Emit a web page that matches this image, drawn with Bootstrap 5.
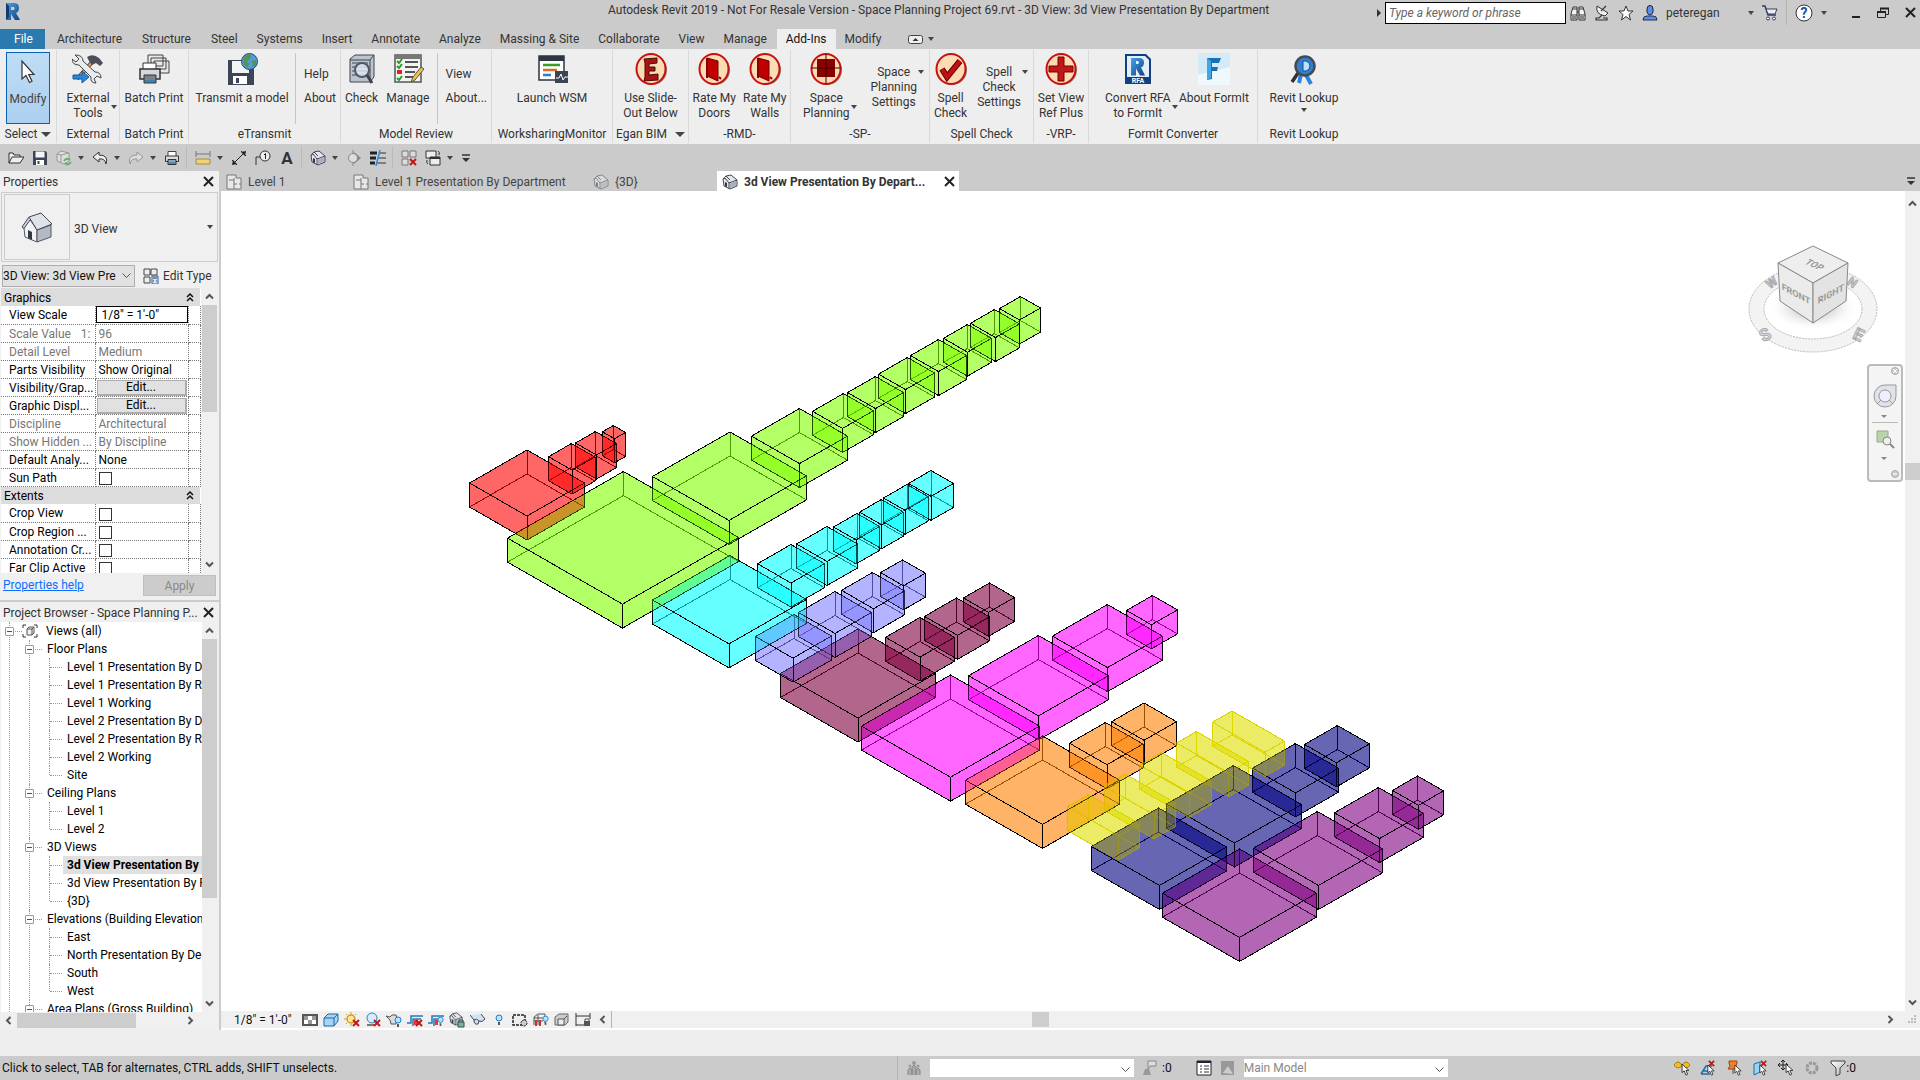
<!DOCTYPE html>
<html lang="en">
<head>
<meta charset="utf-8">
<meta name="viewport" content="width=device-width, initial-scale=1">
<title>Autodesk Revit 2019</title>
<link href="https://cdn.jsdelivr.net/npm/bootstrap@5.3.0/dist/css/bootstrap.min.css" rel="stylesheet">
<style>
:root{--chrome:#cbcbcb;--panel:#eee;--line:#ccc}
body{height:100vh;overflow:hidden;font-family:Roboto,"Open Sans",sans-serif;font-size:12px;line-height:16px;color:#333;background:var(--panel)}
button{font:inherit;color:inherit;background:none;border:0;padding:0}
input,select{font:inherit;color:inherit;border-radius:0}
svg{flex:none;display:block}
.i16{width:16px;height:16px}
.i32{width:32px;height:32px}
.caret{width:0;height:0;border:3px solid transparent;border-top:4px solid #444;border-bottom:0;flex:none}
.caret-lg{border-width:5px 5px 0}
.x-btn svg{width:11px;height:11px}
/* title bar */
.titlebar{height:29px;background:var(--chrome);flex:none}
.title-text{left:608px;top:2px}
.search-box{width:181px;height:22px;border:1px solid #000;padding:0 3px;font-style:italic}
.search-box::placeholder{color:#666;opacity:1}
.user-btn{width:112px}
.vsep{width:1px;align-self:stretch;background:#b3b3b3}
/* ribbon */
.tabstrip{height:20px;background:var(--chrome)}
.tabstrip a{color:#333;text-decoration:none;padding:2px 10px;line-height:16px}
.tabstrip a:nth-child(n+5){padding-left:9px}
.tabstrip a.file-tab{background:#2a7ab0;color:#fff;padding:2px 14px;margin-right:2px;width:45px}
.tabstrip a.active{background:var(--panel);color:#111;padding:2px 9px}
.ribbon{height:95px;background:var(--panel)}
.rpanel{border-right:1px solid #d9d9d9;margin:1px 0}
.rbody{height:74px;padding-top:3px}
.rtitle{height:20px;line-height:20px}
.rb{line-height:15px;position:relative;text-align:center;white-space:nowrap}
.rb svg{margin-bottom:6px}
.rb .caret{position:absolute;right:-7px;top:52px}
.rb.below .caret{right:50%;margin-right:-3px;top:55px}
.rtext{line-height:15px;position:relative;white-space:nowrap;padding-top:12px;align-self:flex-start}
.rtext .caret{position:absolute;right:-7px;top:17px}
.rlinks button{display:block;height:24px;text-align:left}
.rlinks{padding-top:9px;border-left:1px solid #c6c6c6;padding-left:8px}
.w-57{width:57px}.w-63{width:63px}.w-69{width:69px}.w-152{width:152px}.w-151{width:151px}.w-121{width:121px}.w-76{width:76px}.w-102{width:102px}.w-139{width:139px}.w-104{width:104px}.w-55{width:55px}.w-169{width:169px}.w-92{width:92px}
.modify-btn{width:44px;height:72px;margin-top:-1px;background:linear-gradient(#bfdcf5,#acd0f1);border:1px solid #0a60b5;padding-top:2px;color:#444}
.modify-btn svg{margin-bottom:5px}
/* quick access */
.qat{height:27px;background:var(--chrome);padding-left:8px}
.qat .vsep{margin:2px 0 2px 6px;background:#bbb}
.qat .pair{gap:6px}
/* workspace */
.side{width:221px;border-right:2px solid var(--line);background:#f0f0f0}
.side>div{flex-shrink:0}
.side-head{height:20px;padding:1px 5px 0 3px}
.type-box{height:70px;margin:1px 1px 0 1px;border:1px solid var(--line);padding:1px 4px 1px 2px}
.type-thumb{width:66px;border:1px solid var(--line)}
.type-name{padding-top:3px}
.inst-row{margin:3px 0 1px 2px}
.inst-sel{width:133px;height:22px;border:1px solid #adadad;background:#e1e1e1;padding:0 14px 0 0;appearance:none;color:#111}
.chev{position:absolute;right:4px;top:6px;width:9px;height:9px}
.grid-wrap{height:285px;overflow:hidden}
.prop{width:199px;table-layout:fixed;background:#fff;color:#000;border-collapse:collapse;margin:0 1px}
.prop td,.prop th{height:18px;padding:1px 0 0;border-bottom:1px dotted #777;border-right:1px dotted #777;font-weight:400;line-height:16px;white-space:nowrap;overflow:hidden}
.prop th{padding-left:8px}.prop td{padding-left:3px}
.prop .sect th{background:#dcdcdc;border:0;padding:1px 6px 0 3px}
.prop .dis{color:#777}
.prop input[type=text]{width:92px;height:17px;border:1px solid #000;padding:0 5px;margin:-1px 0 0 -3px;display:block;background:#fff}
.prop input[type=checkbox]{width:13px;height:13px;margin:2px 0 0;appearance:none;border:1px solid #333;background:#fff;display:block}
.prop .edit{width:90px;height:16px;margin-left:-2px;line-height:13px;background:#e1e1e1;border:1px solid #adadad;border-bottom-width:2px;border-right-width:2px;display:block;color:#000}
.vbar{width:15px;background:#f0f0f0;padding:4px 0}
.vbar>svg,.hbar>svg{width:9px;height:9px}
.vbar .thumb{width:15px;background:#cdcdcd;flex:none}
.prop-thumb{height:107px}
.tree-thumb{height:259px}
.tree-bar{margin-right:2px}
.hbar{height:16px;background:#f0f0f0}
.hbar .thumb{height:15px;background:#cdcdcd}
.tree-hbar{margin-bottom:2px}
.tree-hthumb{width:119px}
.help-row{height:27px;padding:2px 3px 0}
.help-row a{padding-top:2px}
.apply{width:73px;height:21px;background:#ccc;border:1px solid #bfbfbf;color:#888}
.browser-head{border-top:2px solid var(--line);height:22px}
.side>.tree-area{flex:1 1 0}
.tree{background:#fff;margin-left:1px;overflow:hidden;color:#000}
.tree ul{list-style:none;margin:0;padding:0}
.tree li{position:relative;white-space:nowrap;line-height:18px;padding-left:21px}
.tree li::before{content:"";position:absolute;left:8px;top:0;bottom:0;border-left:1px dotted #999}
.tree li::after{content:"";position:absolute;left:9px;top:9px;width:12px;border-top:1px dotted #999}
.tree li li:last-child::before{bottom:auto;height:9px}
.tree li li{padding-left:26px;margin-left:-1px}
.tree ul.leafs li{margin-left:-6px;padding-left:26px}
.tree .row-label{display:flex;align-items:center;height:18px}
.exp{position:absolute;left:4px;top:5px;width:9px;height:9px;border:1px solid #999;background:#fff;z-index:1;border-radius:1px}
.exp::after{content:"";position:absolute;left:1px;right:1px;top:3px;height:1px;background:#2f4f9f}
.tree .cur{background:#e0e0e0;font-weight:700;margin-left:-4px;padding-left:4px}
/* document area */
.doctabs{height:20px;background:var(--chrome)}
.doctab{gap:6px;padding:1px 0 0 5px;color:#444}
.doctab.w1{width:127px}.doctab.w2{width:240px}.doctab.w3{width:129px}
.doctab.active{background:#fff;font-weight:700;width:242px;color:#333}
.canvas{background:#fff;min-width:0}
.cube-svg{position:absolute;right:22px;top:47px}
.nav-bar{position:absolute;right:2px;top:173px;width:36px;height:118px;border:2px solid #bbb;border-radius:4px;background:#f4f4f4}
.doc-thumb{height:17px;margin-top:255px}
.doc-hthumb{width:17px;margin-left:33%}
.vcb{height:17px;margin-left:2px}
.vcb .scale{width:79px;padding-left:11px;color:#111}
.vcb .tools{gap:5px;width:296px}
.foot-gap{height:2px}
.gutter{height:26px}
.statusbar{height:24px;background:var(--chrome);color:#111}
.status-msg{width:897px;padding-left:2px}
.stat-sel{height:18px;width:204px;background:#fff;border:0;appearance:none;padding:0;color:#888}
.stat-tools{gap:10px;margin-right:64px}
</style>
<script src="https://cdn.jsdelivr.net/npm/bootstrap@5.3.0/dist/js/bootstrap.bundle.min.js"></script>
</head>
<body class="d-flex flex-column">
<svg width="0" height="0" class="position-absolute" aria-hidden="true">
<defs>
<linearGradient id="gs" x1="0" y1="0" x2="1" y2="1"><stop offset="0" stop-color="#fff"/><stop offset="1" stop-color="#aab2bd"/></linearGradient>
<linearGradient id="gr" x1="0" y1="0" x2="1" y2="1"><stop offset="0" stop-color="#4aa3e8"/><stop offset="1" stop-color="#123f80"/></linearGradient>
<radialGradient id="gshade"><stop offset="0" stop-color="#777" stop-opacity=".8"/><stop offset="1" stop-color="#fff" stop-opacity="0"/></radialGradient>
<symbol id="up" viewBox="0 0 9 9"><path d="M1 6.500 4.500 3 8 6.500" fill="none" stroke="#555" stroke-width="2"/></symbol>
<symbol id="down" viewBox="0 0 9 9"><path d="M1 2.500 4.500 6 8 2.500" fill="none" stroke="#555" stroke-width="2"/></symbol>
<symbol id="thin" viewBox="0 0 9 9"><path d="M.5 2.500 4.500 6.500 8.500 2.500" fill="none" stroke="#555"/></symbol>
<symbol id="lft" viewBox="0 0 9 9"><path d="M6.500 1 3 4.500 6.500 8" fill="none" stroke="#555" stroke-width="2"/></symbol>
<symbol id="rgt" viewBox="0 0 9 9"><path d="M2.500 1 6 4.500 2.500 8" fill="none" stroke="#555" stroke-width="2"/></symbol>
<symbol id="cross" viewBox="0 0 11 11"><path d="M1 1 10 10M10 1 1 10" stroke="#222" stroke-width="2"/></symbol>
<symbol id="over" viewBox="0 0 10 8"><path d="M1 1h8" stroke="#333" stroke-width="1.500"/><path d="M1 4h8L5 8z" fill="#333"/></symbol>
<symbol id="house" viewBox="0 0 32 32"><path d="M3 17 8 7l8 12v12L4 26z" fill="#f2f3f5" stroke="#556"/><path d="M16 19l14-5v12l-14 5z" fill="#b4bac4" stroke="#556"/><path d="M8 6 20 2l11 11-15 6z" fill="#dfe3e9" stroke="#445"/><path d="M8 6 1 16l2 1.500L9 9" fill="#cfd4db" stroke="#445"/><path d="M7 19l4 2v8l-4-2z" fill="#333a44"/></symbol>
<symbol id="cubehouse" viewBox="0 0 16 16"><path d="M1 5 4 2l5-1 6 5v6l-7 3-6-3z" fill="#e4e7ec" stroke="#445"/><path d="M1 5l2-1 4 5v6M7 9l8-3M4 2l4 4" fill="none" stroke="#445"/><path d="M8 9.500l6-2.500v4.500L8 14z" fill="#a8afba"/><path d="M3 8l2 1v4l-2-1z" fill="#333"/></symbol>
<symbol id="plan" viewBox="0 0 16 16"><path d="M1 1h9v3h5v11H1z" fill="#e8e8e8" stroke="#777"/><path d="M3 6h5v9M8 6V4M8 10h3M13 10h2" fill="none" stroke="#777"/></symbol>
<symbol id="disk" viewBox="0 0 32 32"><path d="M2 2h25l3 3v25H2z" fill="#3d4656"/><path d="M7 3h18v12H7z" fill="#f4f6f8"/><path d="M8 20h16v10H8z" fill="#fff"/><path d="M11 22h4v6h-4z" fill="#3d4656"/></symbol>
<symbol id="printer" viewBox="0 0 32 32"><path d="M8 3h16v11H8z" fill="#fff" stroke="#444" stroke-width="2"/><path d="M3 12h26v11H3z" fill="#d9dde3" stroke="#333" stroke-width="2"/><path d="M8 19h16v10H8z" fill="#9aa3ad" stroke="#333" stroke-width="2"/><path d="M10 26h12" stroke="#2a86c8" stroke-width="3"/></symbol>
<symbol id="coin" viewBox="0 0 32 32"><ellipse cx="17.500" cy="17" rx="14.500" ry="15" fill="#8d8478"/><ellipse cx="16" cy="16" rx="14.500" ry="15" fill="#fbdcb5" stroke="#c81010" stroke-width="2"/></symbol>
<symbol id="door" viewBox="0 0 32 32"><use href="#coin"/><path d="M9 5v20M21 24l2 2" stroke="#900" stroke-width="2"/><path d="M9 5 20 8v20L9 23z" fill="#c00000" stroke="#600"/></symbol>
<symbol id="redx" viewBox="0 0 8 8"><path d="M1 1l6 6M7 1 1 7" stroke="#c51616" stroke-width="2"/></symbol>
<symbol id="ptr" viewBox="0 0 10 14"><path d="M1 0v10l2.500-2 2 5 2-1-2-4.500H9z" fill="#fff" stroke="#222" stroke-width="1"/></symbol>
<symbol id="bulb" viewBox="0 0 8 12"><circle cx="4" cy="4" r="3" fill="#bfe3fb" stroke="#1b7fd0"/><path d="M3 8h2v3H3z" fill="#555"/></symbol>
</defs>
</svg>

<header class="titlebar position-relative d-flex">
  <svg class="position-absolute top-0 start-0" width="24" height="24" viewBox="0 0 24 24"><path d="M6 3h8q5 0 5 5 0 4-3 5l4 7h-5l-4-6v6H6z" fill="url(#gr)"/><path d="M6 3v17l3-3V6z" fill="#123c70"/><path d="M11 7h3q1.500 1 0 3h-3z" fill="#cbcbcb"/></svg>
  <div class="title-text position-absolute text-nowrap">Autodesk Revit 2019 - Not For Resale Version - Space Planning Project 69.rvt - 3D View: 3d View Presentation By Department</div>
  <div class="d-flex align-items-center position-relative ms-auto pb-1">
    <svg class="me-1" width="5" height="8" viewBox="0 0 5 8"><path d="M1 0 5 4 1 8z" fill="#333"/></svg>
    <input class="search-box" type="text" placeholder="Type a keyword or phrase" aria-label="Search">
    <button class="ms-1" aria-label="Find"><svg class="i16" viewBox="0 0 16 16"><path d="M1 15V9l2-7h4v13zM15 15V9l-2-7H9v13z" fill="#f5f5f5" stroke="#333"/><path d="M1 10h6M9 10h6M3 4h4M9 4h4M7 7h2" stroke="#333"/><path d="M2 11h4v4H2zM10 11h4v4h-4z" fill="#888"/></svg></button>
    <button class="ms-2" aria-label="Communication center"><svg class="i16" viewBox="0 0 16 16"><path d="M3 1q-2 8 8 10l3-3z" fill="#eee" stroke="#333"/><path d="M7 6l5-5M8 10l-3 3h-3v2h11v-2H9" stroke="#333" fill="none" stroke-width="1.200"/></svg></button>
    <button class="ms-2" aria-label="Favorites"><svg class="i16" viewBox="0 0 16 16"><path d="M8 1l2 5h5l-4 3.500L12.500 15 8 11.500 3.500 15 5 9.500 1 6h5z" fill="#fff" stroke="#333"/></svg></button>
    <button class="user-btn ms-2 d-flex align-items-center gap-2"><svg class="i16" viewBox="0 0 16 16"><path d="M5 4q0-3.500 3-3.500T11 4v3q-1 3-3 3T5 7z" fill="#5d8df0" stroke="#223"/><path d="M1 15q0-4 4-4h6q4 0 4 4z" fill="#5d8df0" stroke="#234"/></svg><span>peteregan</span><span class="caret ms-auto"></span></button>
    <button class="ms-2 me-2" aria-label="App store"><svg class="i16" viewBox="0 0 16 16"><path d="M0 1h3l3 9h8" fill="none" stroke="#333a6b" stroke-width="1.500"/><path d="M4 4h11l-2 5H6z" fill="#eee" stroke="#333a6b"/><circle cx="6" cy="13.500" r="1.500" fill="#fff" stroke="#333a6b"/><circle cx="12" cy="13.500" r="1.500" fill="#fff" stroke="#333a6b"/></svg></button>
    <span class="vsep"></span>
    <button class="ms-2 d-flex align-items-center gap-2" aria-label="Help"><svg width="18" height="18" viewBox="0 0 18 18"><circle cx="9" cy="9" r="8" fill="#fff" stroke="#333"/><text x="9" y="14" text-anchor="middle" font-size="14" font-weight="700" fill="#2450a8">?</text></svg><span class="caret"></span></button>
    <button class="ms-4" aria-label="Minimize"><svg width="10" height="12"><path d="M1 10h8" stroke="#222" stroke-width="2"/></svg></button>
    <button class="ms-3" aria-label="Restore"><svg width="12" height="12" viewBox="0 0 12 12"><path d="M3.500 4V1.500h8v6H9M.5 4.500h8v6h-8z" fill="none" stroke="#222"/><path d="M3 1.500h9M0 5h9" stroke="#222" stroke-width="2"/></svg></button>
    <button class="ms-3 me-1 x-btn" aria-label="Close"><svg><use href="#cross"/></svg></button>
  </div>
</header>

<nav class="tabstrip d-flex" aria-label="Ribbon tabs">
  <a href="#" class="file-tab">File</a><a href="#">Architecture</a><a href="#">Structure</a><a href="#">Steel</a><a href="#">Systems</a><a href="#">Insert</a><a href="#">Annotate</a><a href="#">Analyze</a><a href="#">Massing &amp; Site</a><a href="#">Collaborate</a><a href="#">View</a><a href="#">Manage</a><a href="#" class="active">Add-Ins</a><a href="#">Modify</a>
  <button class="d-flex align-items-center gap-1 ms-3" aria-label="Minimize ribbon"><svg width="17" height="11" viewBox="0 0 17 11"><rect x="1.500" y="1.500" width="14" height="8" rx="2" fill="#eee" stroke="#444"/><path d="M5.500 7 8.500 4l3 3z" fill="#333"/></svg><span class="caret"></span></button>
</nav>

<section class="ribbon d-flex text-center">
  <div class="rpanel w-57"><div class="rbody d-flex justify-content-center"><button class="rb modify-btn d-flex flex-column align-items-center"><svg class="i32" viewBox="0 0 32 32"><path d="M10 6v18l4-3.500 3.500 7 2.500-1.200-3.300-6.800H22z" fill="#fff" stroke="#333" stroke-width="1.200"/></svg>Modify</button></div><div class="rtitle d-flex justify-content-center align-items-center gap-1">Select <span class="caret caret-lg"></span></div></div>
  <div class="rpanel w-63"><div class="rbody d-flex justify-content-center"><button class="rb d-flex flex-column align-items-center"><svg class="i32" viewBox="0 0 32 32"><path d="M5 26 22 7" stroke="#5a3d20" stroke-width="4"/><path d="M5 26 22 7" stroke="#f0a060" stroke-width="2"/><path d="M15 4q6-4 12 1l4 5-3 3-4-3-4 2-3-4z" fill="#4b4f57"/><path d="M3 2l4 4-3 3-4-3q0 6 7 6l12 12q-1 6 5 6l-2-4 3-3 4 2q0-6-6-6L11 8q0-6-8-6z" fill="#e8ebef" stroke="#444"/><path d="M1 22h9v-4l7 6-7 6v-4H1z" fill="#2a86d8" stroke="#135a9e"/></svg><span>External<br>Tools</span><span class="caret"></span></button></div><div class="rtitle">External</div></div>
  <div class="rpanel w-69"><div class="rbody d-flex justify-content-center"><button class="rb d-flex flex-column align-items-center"><svg class="i32" viewBox="0 0 32 32"><path d="M10 2h15v11H10zM13 5h15v11H13zM16 8h15v12H16z" fill="#e5e8ec" stroke="#444"/><path d="M5 10h13v8H5z" fill="#fff" stroke="#333"/><path d="M2 16h20v10H2z" fill="#d5d9df" stroke="#333" stroke-width="1.500"/><path d="M6 22h12v8H6z" fill="#79828d" stroke="#333"/><path d="M7 28h10" stroke="#2a86c8" stroke-width="2"/></svg>Batch Print</button></div><div class="rtitle">Batch Print</div></div>
  <div class="rpanel w-152"><div class="rbody d-flex"><button class="rb d-flex flex-column align-items-center flex-grow-1"><svg class="i32" viewBox="0 0 32 32"><path d="M2 7h24l2 2v23H2z" fill="#3d4656"/><path d="M6 8h17v12H6z" fill="#f2f4f6"/><path d="M7 23h14v8H7z" fill="#fff"/><path d="M10 25h3v5h-3z" fill="#3d4656"/><circle cx="23.500" cy="8.500" r="8" fill="#4c9fd6" stroke="#2b4b66"/><path d="M18 4q5-4 7-2l-1 4-3 2 2 3-2 4q-5-4-3-11zM26 8l4-1q1 5-3 7z" fill="#5b8f58"/></svg>Transmit a model</button><div class="rlinks"><button>Help</button><button class="me-1">About</button></div></div><div class="rtitle">eTransmit</div></div>
  <div class="rpanel w-151"><div class="rbody d-flex"><button class="rb ms-1 d-flex flex-column align-items-center"><svg class="i32" viewBox="0 0 32 32"><path d="M4 6 9 2h19v22l-4 5H4z" fill="#b9c4cf" stroke="#444"/><path d="M4 7h20v22M24 7l4-5" fill="none" stroke="#444"/><path d="M6 10h16M6 14h16M6 18h16M6 22h16" stroke="#7a8896" stroke-width="2"/><circle cx="16" cy="17" r="7" fill="#dfe9f2" fill-opacity=".8" stroke="#556" stroke-width="2"/><path d="M21 22l5 8" stroke="#444" stroke-width="3"/></svg>Check</button><button class="rb ms-2 d-flex flex-column align-items-center"><svg class="i32" viewBox="0 0 32 32"><path d="M3 2h26v27H3z" fill="#f3f3f3" stroke="#555" stroke-width="1.500"/><path d="M3 2h26v4H3z" fill="#777"/><path d="M13 9h13M13 14h13M13 19h10M13 24h8" stroke="#555" stroke-width="2"/><path d="M5 8l2 2 3-4M5 13l2 2 3-4M5 25l2 2 3-4" stroke="#2a9b2a" stroke-width="2" fill="none"/><path d="M5 17h5v4H5z" fill="#d22"/><path d="M19 29l2-5 8-10 3 2-9 11z" fill="#f2c14a" stroke="#555"/></svg>Manage</button><div class="rlinks ms-auto me-1"><button>View</button><button>About...</button></div></div><div class="rtitle">Model Review</div></div>
  <div class="rpanel w-121"><div class="rbody d-flex justify-content-center"><button class="rb d-flex flex-column align-items-center"><svg class="i32" viewBox="0 0 32 32"><path d="M3 3h25v24H3z" fill="#fff" stroke="#2d3540" stroke-width="1.500"/><path d="M3 3h25v5H3z" fill="#2d3540"/><path d="M7 12h17" stroke="#3a9b2a" stroke-width="2.500"/><path d="M7 17h14" stroke="#e06d1c" stroke-width="2.500"/><path d="M7 22h8" stroke="#2a7fd0" stroke-width="2.500"/><path d="M19 18h13v12H19z" fill="#3a4452"/><path d="M20 25h3l2-4 2 6 2-3h3" stroke="#fff" fill="none"/></svg>Launch WSM</button></div><div class="rtitle">WorksharingMonitor</div></div>
  <div class="rpanel w-76"><div class="rbody d-flex justify-content-center"><button class="rb d-flex flex-column align-items-center"><svg class="i32" viewBox="0 0 32 32"><use href="#coin"/><path d="M9 6l13-1v5l-8 1v3h6v4h-6v4l9-1v6l-14 1 1-4V10z" fill="#a81414" stroke="#4a0a0a"/></svg><span>Use Slide-<br>Out Below</span></button></div><div class="rtitle d-flex justify-content-center align-items-center gap-2">Egan BIM <span class="caret caret-lg"></span></div></div>
  <div class="rpanel w-102"><div class="rbody d-flex justify-content-around"><button class="rb d-flex flex-column align-items-center"><svg class="i32"><use href="#door"/></svg><span>Rate My<br>Doors</span></button><button class="rb d-flex flex-column align-items-center"><svg class="i32"><use href="#door"/></svg><span>Rate My<br>Walls</span></button></div><div class="rtitle">-RMD-</div></div>
  <div class="rpanel w-139"><div class="rbody d-flex justify-content-between ps-2 pe-2"><button class="rb ms-1 d-flex flex-column align-items-center"><svg class="i32" viewBox="0 0 32 32"><use href="#coin"/><path d="M7 6h18v18H7z" fill="#8b0000"/><path d="M16 1v30M1 15h30" stroke="#400"/></svg><span>Space<br>Planning</span><span class="caret"></span></button><button class="rtext me-1">Space<br>Planning<br>Settings<span class="caret"></span></button></div><div class="rtitle">-SP-</div></div>
  <div class="rpanel w-104"><div class="rbody d-flex justify-content-between ps-1 pe-2"><button class="rb d-flex flex-column align-items-center"><svg class="i32" viewBox="0 0 32 32"><use href="#coin"/><path d="M7 16l5 8L25 8" stroke="#600" stroke-width="6" fill="none"/><path d="M7 16l5 8L25 8" stroke="#c01010" stroke-width="4" fill="none"/></svg><span>Spell<br>Check</span></button><button class="rtext me-1">Spell<br>Check<br>Settings<span class="caret"></span></button></div><div class="rtitle">Spell Check</div></div>
  <div class="rpanel w-55"><div class="rbody d-flex justify-content-center"><button class="rb d-flex flex-column align-items-center"><svg class="i32" viewBox="0 0 32 32"><use href="#coin"/><path d="M13 4h6v9h9v6h-9v9h-6v-9H4v-6h9z" fill="#c01818" stroke="#700"/></svg><span>Set View<br>Ref Plus</span></button></div><div class="rtitle">-VRP-</div></div>
  <div class="rpanel w-169"><div class="rbody d-flex justify-content-between ps-3 pe-2"><button class="rb d-flex flex-column align-items-center"><svg class="i32" viewBox="0 0 32 32"><path d="M3 1h21l5 5v25H3z" fill="#123f80"/><path d="M5 3h18l4 4v17H5z" fill="#e2effa"/><path d="M9 5h8q5 0 5 4.500 0 4-3 5l4 8h-5l-4-7v7H9z" fill="url(#gr)"/><path d="M14 8h2q2 1.500 0 3h-2z" fill="#e2effa"/><text x="16" y="30" font-size="7" font-weight="700" fill="#fff" text-anchor="middle">RFA</text></svg><span>Convert RFA<br>to FormIt</span><span class="caret"></span></button><button class="rb d-flex flex-column align-items-center"><svg class="i32" viewBox="0 0 32 32"><path d="M0 0h32v32H0z" fill="#d3ebf8"/><path d="M0 22 32 14v18H0z" fill="#eef8fd"/><path d="M9 5h14l-2 5h-7v4h6l-1 4h-5v8l-5 1z" fill="#1a6fb4"/><path d="M9 5l4 3v17l-4 2z" fill="#3fa9e0"/></svg>About FormIt</button></div><div class="rtitle">FormIt Converter</div></div>
  <div class="rpanel w-92 border-0"><div class="rbody d-flex justify-content-center"><button class="rb below d-flex flex-column align-items-center"><svg class="i32" viewBox="0 0 32 32"><path d="M17 20l6 11M13 21l-2 9" stroke="#2a86d8" stroke-width="4"/><path d="M10 20 4 29" stroke="#333" stroke-width="3.500"/><circle cx="17" cy="13" r="9.500" fill="#2f80d0" stroke="#444b55" stroke-width="2.500"/><path d="M15 8h3q4 1 4 5t-4 5h-3z" fill="#bfe0f8" stroke="#14508f"/></svg>Revit Lookup<span class="caret"></span></button></div><div class="rtitle">Revit Lookup</div></div>
</section>

<div class="qat d-flex align-items-center" role="toolbar">
  <button aria-label="Open"><svg class="i16" viewBox="0 0 16 16"><path d="M1 13V3h4l1 2h6v2M1 13l3-6h12l-4 6z" fill="#eee" stroke="#333"/></svg></button>
  <button class="ms-2" aria-label="Save"><svg class="i16"><use href="#disk"/></svg></button>
  <button class="ms-2 d-flex align-items-center pair" aria-label="Synchronize"><svg class="i16" viewBox="0 0 16 16"><path d="M1 4 5 1l8 2v8l-5 3-7-3z" fill="#ddd" stroke="#999"/><path d="M5 5v8M5 5l8-2M5 5 1 4" stroke="#999"/><path d="M8 11q3-4 6-1M15 12q-3 4-6 1" stroke="#62b06a" stroke-width="2" fill="none"/></svg><span class="caret"></span></button>
  <button class="ms-2 d-flex align-items-center pair" aria-label="Undo"><svg class="i16" viewBox="0 0 16 16"><path d="M7 2 1 7l6 5V9q6-1 7 5 3-9-7-9z" fill="#eee" stroke="#333"/></svg><span class="caret"></span></button>
  <button class="ms-2 d-flex align-items-center pair" aria-label="Redo"><svg class="i16" viewBox="0 0 16 16"><path d="M9 2l6 5-6 5V9q-6-1-7 5-3-9 7-9z" fill="#ddd" stroke="#999"/></svg><span class="caret"></span></button>
  <button class="ms-2" aria-label="Print"><svg class="i16"><use href="#printer"/></svg></button>
  <span class="vsep"></span>
  <button class="ms-2 d-flex align-items-center pair" aria-label="Measure"><svg class="i16" viewBox="0 0 16 16"><path d="M1 1v6M15 1v6M1 4h14" stroke="#777"/><path d="M1 9h14v5H1z" fill="#f0d27a" stroke="#a68a3a"/></svg><span class="caret"></span></button>
  <button class="ms-2" aria-label="Aligned dimension"><svg class="i16" viewBox="0 0 16 16"><path d="M3 13 13 3" stroke="#222"/><path d="M1 15l1-5 4 4zM15 1l-5 1 4 4z" fill="#222"/><path d="M1 10l5 5M10 1l5 5" stroke="#222"/></svg></button>
  <button class="ms-2" aria-label="Tag"><svg class="i16" viewBox="0 0 16 16"><path d="M1 15V7h5" fill="none" stroke="#333"/><circle cx="10" cy="6" r="5" fill="#eee" stroke="#333"/><path d="M9 5l1.500-1.500V9" fill="none" stroke="#222"/></svg></button>
  <button class="ms-2" aria-label="Text"><svg class="i16" viewBox="0 0 16 16"><text x="8" y="14" text-anchor="middle" font-size="17" font-weight="700" fill="#333">A</text></svg></button>
  <span class="vsep"></span>
  <button class="ms-2 d-flex align-items-center pair" aria-label="Default 3D view"><svg class="i16"><use href="#cubehouse"/></svg><span class="caret"></span></button>
  <button class="ms-2" aria-label="Section"><svg class="i16" viewBox="0 0 16 16"><path d="M8 2l7 6-7 6z" fill="#888"/><circle cx="7" cy="8" r="4.500" fill="#ddd" stroke="#888"/><path d="M7 0v3M7 13v3" stroke="#888"/></svg></button>
  <button class="ms-2" aria-label="Thin lines"><svg class="i16" viewBox="0 0 16 16"><path d="M0 3h7M0 8h6M0 13h5" stroke="#222" stroke-width="3"/><path d="M9 3h7M8 8h8M7 13h9" stroke="#333"/><path d="M10 0 6 16" stroke="#2a8ae0" stroke-width="1.500"/></svg></button>
  <span class="vsep"></span>
  <button class="ms-2" aria-label="Close inactive"><svg class="i16" viewBox="0 0 16 16"><path d="M1 1h6v6H1zM9 1h6v6H9zM1 9h6v6H1z" fill="#ddd" stroke="#777"/><use href="#redx" x="8" y="8" width="8" height="8"/></svg></button>
  <button class="ms-2 d-flex align-items-center pair" aria-label="Switch windows"><svg class="i16" viewBox="0 0 16 16"><path d="M1 1h10v7H1zM5 7h10v8H5z" fill="#eee" stroke="#333"/><path d="M5 8h10" stroke="#333" stroke-width="2"/><path d="M13 1q2 1 1 4M2 10q-1 3 1 4" stroke="#333" fill="none"/></svg><span class="caret"></span></button>
  <button class="ms-2" aria-label="Customize"><svg width="10" height="8"><use href="#over"/></svg></button>
</div>

<main class="d-flex flex-grow-1 overflow-hidden">
<aside class="side d-flex flex-column flex-shrink-0">
  <div class="side-head d-flex align-items-center justify-content-between"><span>Properties</span><button class="x-btn" aria-label="Close properties"><svg><use href="#cross"/></svg></button></div>
  <div class="type-box d-flex align-items-center"><div class="type-thumb align-self-stretch d-flex align-items-center justify-content-center"><svg class="i32"><use href="#house"/></svg></div><span class="ms-1 type-name">3D View</span><span class="caret ms-auto"></span></div>
  <div class="d-flex align-items-center inst-row"><div class="position-relative"><select class="inst-sel d-block" aria-label="Instance"><option>3D View: 3d View Pre</option></select><svg class="chev"><use href="#thin"/></svg></div>
  <button class="d-flex align-items-center gap-1 ms-2"><svg class="i16" viewBox="0 0 16 16"><path d="M1 1h6v6H1zM8 1h6v6H8zM1 9h6v6H1z" fill="#eee" stroke="#444"/><path d="M9 8h6v8H9z" fill="#d6e6f7" stroke="#2b5fa0"/><path d="M10 10h4M10 13h1M13 13h1" stroke="#234" /></svg>Edit Type</button></div>
  <div class="grid-wrap d-flex">
    <table class="prop"><colgroup><col width="94"><col width="93"><col width="12"></colgroup>
    <tbody>
    <tr class="sect"><th colspan="3"><div class="d-flex justify-content-between align-items-center">Graphics<svg width="8" height="9" viewBox="0 0 8 9"><path d="M1 4l3-3 3 3M1 8l3-3 3 3" fill="none" stroke="#111" stroke-width="1.500"/></svg></div></th></tr>
    <tr><th><label for="vs">View Scale</label></th><td><input id="vs" type="text" value="1/8&quot; = 1'-0&quot;"></td><td></td></tr>
    <tr class="dis"><th><div class="d-flex justify-content-between pe-1">Scale Value<span>1:</span></div></th><td>96</td><td></td></tr>
    <tr class="dis"><th>Detail Level</th><td>Medium</td><td></td></tr>
    <tr><th>Parts Visibility</th><td>Show Original</td><td></td></tr>
    <tr><th>Visibility/Grap...</th><td><button class="edit">Edit...</button></td><td></td></tr>
    <tr><th>Graphic Displ...</th><td><button class="edit">Edit...</button></td><td></td></tr>
    <tr class="dis"><th>Discipline</th><td>Architectural</td><td></td></tr>
    <tr class="dis"><th>Show Hidden ...</th><td>By Discipline</td><td></td></tr>
    <tr><th>Default Analy...</th><td>None</td><td></td></tr>
    <tr><th><label for="sp">Sun Path</label></th><td><input id="sp" type="checkbox"></td><td></td></tr>
    <tr class="sect"><th colspan="3"><div class="d-flex justify-content-between align-items-center">Extents<svg width="8" height="9" viewBox="0 0 8 9"><path d="M1 4l3-3 3 3M1 8l3-3 3 3" fill="none" stroke="#111" stroke-width="1.500"/></svg></div></th></tr>
    <tr><th><label for="cv">Crop View</label></th><td><input id="cv" type="checkbox"></td><td></td></tr>
    <tr><th><label for="cr">Crop Region ...</label></th><td><input id="cr" type="checkbox"></td><td></td></tr>
    <tr><th><label for="ac">Annotation Cr...</label></th><td><input id="ac" type="checkbox"></td><td></td></tr>
    <tr><th><label for="fc">Far Clip Active</label></th><td><input id="fc" type="checkbox"></td><td></td></tr>
    </tbody></table>
    <div class="vbar d-flex flex-column align-items-center"><svg><use href="#up"/></svg><div class="thumb mt-1 prop-thumb"></div><svg class="mt-auto"><use href="#down"/></svg></div>
  </div>
  <div class="d-flex justify-content-between align-items-start help-row"><a href="#">Properties help</a><button class="apply" disabled>Apply</button></div>
  <div class="side-head browser-head d-flex align-items-center justify-content-between"><span>Project Browser - Space Planning P...</span><button class="x-btn" aria-label="Close browser"><svg><use href="#cross"/></svg></button></div>
  <div class="d-flex tree-area overflow-hidden">
    <div class="tree flex-grow-1">
      <ul><li><span class="exp"></span><span class="row-label"><svg class="me-2" width="16" height="14" viewBox="0 0 16 14"><path d="M4 1H1v3M12 1h3v3M4 13H1v-3M12 13h3v-3" fill="none" stroke="#333"/><path d="M5 5l2-2h5v6l-2 2H5zM5 5h5v6M10 5l2-2" fill="#e8f0f8" stroke="#555"/></svg>Views (all)</span>
        <ul>
          <li><span class="exp"></span><span class="row-label">Floor Plans</span><ul class="leafs"><li>Level 1 Presentation By Department</li><li>Level 1 Presentation By Room</li><li>Level 1 Working</li><li>Level 2 Presentation By Department</li><li>Level 2 Presentation By Room</li><li>Level 2 Working</li><li>Site</li></ul></li>
          <li><span class="exp"></span><span class="row-label">Ceiling Plans</span><ul class="leafs"><li>Level 1</li><li>Level 2</li></ul></li>
          <li><span class="exp"></span><span class="row-label">3D Views</span><ul class="leafs"><li><div class="cur">3d View Presentation By Department</div></li><li>3d View Presentation By Room</li><li>{3D}</li></ul></li>
          <li><span class="exp"></span><span class="row-label">Elevations (Building Elevation)</span><ul class="leafs"><li>East</li><li>North Presentation By Department</li><li>South</li><li>West</li></ul></li>
          <li><span class="exp"></span><span class="row-label">Area Plans (Gross Building)</span></li>
        </ul></li></ul>
    </div>
    <div class="vbar tree-bar d-flex flex-column align-items-center flex-shrink-0"><svg><use href="#up"/></svg><div class="thumb mt-1 tree-thumb"></div><svg class="mt-auto"><use href="#down"/></svg></div>
  </div>
  <div class="hbar tree-hbar d-flex align-items-center ps-1"><svg><use href="#lft"/></svg><div class="thumb ms-1 tree-hthumb"></div><svg class="ms-auto me-4"><use href="#rgt"/></svg></div>
</aside>

<section class="d-flex flex-column flex-grow-1 overflow-hidden">
  <div class="doctabs d-flex">
    <div class="doctab w1 d-flex align-items-center"><svg class="i16"><use href="#plan"/></svg>Level 1</div>
    <div class="doctab w2 d-flex align-items-center"><svg class="i16"><use href="#plan"/></svg>Level 1 Presentation By Department</div>
    <div class="doctab w3 d-flex align-items-center"><svg class="i16 opacity-50"><use href="#cubehouse"/></svg>{3D}</div>
    <div class="doctab active d-flex align-items-center"><svg class="i16"><use href="#cubehouse"/></svg>3d View Presentation By Depart...<button class="x-btn ms-auto me-1" aria-label="Close view"><svg><use href="#cross"/></svg></button></div>
    <button class="ms-auto me-1" aria-label="Tab list"><svg width="10" height="8"><use href="#over"/></svg></button>
  </div>
  <div class="d-flex flex-grow-1 overflow-hidden">
    <div class="canvas flex-grow-1 position-relative overflow-hidden">
      <svg id="model" class="w-100 h-100" viewBox="221 191 1684 820" preserveAspectRatio="xMidYMid meet"></svg>
      <svg class="cube-svg" width="140" height="120" viewBox="1743 238 140 120">
        <ellipse cx="1813" cy="309" rx="64" ry="43" fill="#f3f3f3" stroke="#bbb" stroke-dasharray="2 1"/>
        <ellipse cx="1813" cy="309" rx="49" ry="30" fill="#fff" stroke="#bbb" stroke-dasharray="2 1"/>
        <ellipse cx="1813" cy="307" rx="45" ry="24" fill="url(#gshade)"/>
        <g font-weight="700" font-size="17" fill="#ddd" stroke="#aaa" text-anchor="middle"><text transform="translate(1774 286) rotate(-35)" font-size="12">W</text><text transform="translate(1850 286) rotate(35)" font-size="12">N</text><text transform="translate(1768 340) rotate(-30)">S</text><text transform="translate(1856 340) rotate(25)">E</text></g>
        <path d="M1813 246 1848 263 1813 283 1778 263z" fill="#eee" stroke="#888"/>
        <path d="M1778 263l35 20v40l-33-22z" fill="#ebebeb" stroke="#888"/><path d="M1848 263l-35 20v40l33-22z" fill="#e3e3e3" stroke="#888"/>
        <g font-weight="700" font-size="9" fill="#9a9a9a" text-anchor="middle"><text transform="translate(1796 297) skewY(28)">FRONT</text><text transform="translate(1831 297) skewY(-28)">RIGHT</text><text transform="translate(1812 267) rotate(25) skewX(-25)">TOP</text></g>
      </svg>
      <div class="nav-bar d-flex flex-column align-items-center">
        <svg width="32" height="114" viewBox="1869 366 32 114"><g fill="#ccc" stroke="#aaa"><circle cx="1895" cy="371" r="3.500"/><circle cx="1895" cy="474" r="3.500"/></g><path d="M1893 369l4 4M1897 369l-4 4M1893 474h4" stroke="#fff"/><path d="M1885 385h11v11a11 11 0 1 1-11-11z" fill="#dfe2e8" stroke="#999"/><circle cx="1885" cy="396" r="6" fill="#eef" stroke="#999"/><path d="M1881 400l-4 4M1889 400l4 4" stroke="#999"/><path d="M1881 415h6l-3 3zM1881 457h6l-3 3z" fill="#888"/><path d="M1872 422.500h26" stroke="#bbb"/><path d="M1877 431h11v11h-11z" fill="#b9d3ab" stroke="#8fae82"/><circle cx="1887" cy="441" r="4" fill="#eee" stroke="#888"/><path d="M1890 444l4 4" stroke="#888" stroke-width="2"/></svg>
      </div>
    </div>
    <div class="vbar d-flex flex-column align-items-center flex-shrink-0"><svg class="mt-1"><use href="#up"/></svg><div class="thumb doc-thumb"></div><svg class="mt-auto"><use href="#down"/></svg></div>
  </div>
  <div class="vcb hbar d-flex align-items-center">
    <span class="scale">1/8" = 1'-0"</span>
    <div class="tools d-flex">
      <svg class="i16" viewBox="0 0 16 16"><path d="M0 2h16v12H0z" fill="#555"/><path d="M2 4h12v8H2z" fill="#fff"/><path d="M2 4h4v4H2zM10 4h4v4h-4zM6 8h4v4H6z" fill="#999"/></svg>
      <svg class="i16" viewBox="0 0 16 16"><path d="M1 6l4-4h10v7l-4 5H1z" fill="#a9d4f4" stroke="#1668a8"/><path d="M1 6h10v8M11 6l4-4" fill="none" stroke="#1668a8"/></svg>
      <svg class="i16" viewBox="0 0 16 16"><circle cx="7" cy="7" r="4" fill="#fde9a0" stroke="#d99b16" stroke-width="1.500"/><path d="M7 0v2M7 12v2M0 7h2M2 2l1 1M12 2l-1 1M2 12l1-1" stroke="#d99b16"/><use href="#redx" x="8" y="7" width="8" height="8"/></svg>
      <svg class="i16" viewBox="0 0 16 16"><circle cx="7" cy="6" r="5" fill="#d8ecfa" stroke="#2a7fc8"/><path d="M2 13h7" stroke="#777" stroke-width="2"/><use href="#redx" x="8" y="7" width="8" height="8"/></svg>
      <svg class="i16" viewBox="0 0 16 16"><path d="M0 4l4 1 2-2h4l1 3-1 6H5L4 8z" fill="#ddd" stroke="#555"/><use href="#bulb" x="8" y="4" width="8" height="12"/></svg>
      <svg class="i16" viewBox="0 0 16 16"><path d="M0 11h4V4h12M6 14V7h8" fill="none" stroke="#2377b8" stroke-width="1.500"/><path d="M7 8h4v5H7z" fill="#e33"/><use href="#redx" x="8" y="7" width="8" height="8"/></svg>
      <svg class="i16" viewBox="0 0 16 16"><path d="M0 11h4V4h12M6 14V7h8" fill="none" stroke="#2377b8" stroke-width="1.500"/><path d="M7 8h3v5H7z" fill="#e33"/><use href="#bulb" x="9" y="4" width="7" height="11"/></svg>
      <svg class="i16" viewBox="0 0 16 16"><use href="#cubehouse" width="14" height="14"/><path d="M9 10h6v5H9z" fill="#7fb0a0" stroke="#355"/><path d="M10 10V8h4v2" fill="none" stroke="#355"/></svg>
      <svg class="i16" viewBox="0 0 16 16"><path d="M0 3l4 5q3-2 5 1 3 2 6-2l-4-5M4 8q0 5 4 4l1-3" fill="#cfe3f2" stroke="#445"/></svg>
      <svg class="i16" viewBox="0 0 16 16"><use href="#bulb" x="4" y="2" width="8" height="12"/></svg>
      <svg class="i16" viewBox="0 0 16 16"><path d="M1 3h12v10H1z" fill="#eee" stroke="#222" stroke-width="1.500" stroke-dasharray="3 1"/><circle cx="12" cy="11" r="3" fill="#ccc" stroke="#222" stroke-dasharray="2 1"/></svg>
      <svg class="i16" viewBox="0 0 16 16"><path d="M1 13V5l4-3h7v9M1 6h9M1 9h9M5 3v10" fill="none" stroke="#555"/><path d="M3 8v6M7 8v6" stroke="#c33" stroke-width="2"/><use href="#bulb" x="9" y="3" width="7" height="11"/></svg>
      <svg class="i16" viewBox="0 0 16 16"><path d="M1 5l4-3h9v8l-3 3H1z" fill="#ccc" stroke="#666"/><path d="M4 7h6v6H4zM10 7l3-3" fill="#eee" stroke="#555"/></svg>
      <svg class="i16" viewBox="0 0 16 16"><path d="M1 1v13M15 1v6M1 4h14M1 13h8" fill="none" stroke="#333"/><path d="M9 9h6v5H9z" fill="#555"/><path d="M10 9V7h4v2" fill="none" stroke="#555"/></svg>
    </div>
    <svg><use href="#lft"/></svg><span class="vsep ms-1"></span>
    <div class="flex-grow-1 d-flex"><div class="thumb doc-hthumb"></div></div>
    <svg class="me-2"><use href="#rgt"/></svg><svg class="ms-1 me-1"><path d="M7 1h2M4 4h5M1 7h8" stroke="#bbb" stroke-width="2" stroke-dasharray="2 1"/></svg>
  </div>
  <div class="bg-white foot-gap"></div>
</section>
</main>
<div class="gutter"></div>
<footer class="statusbar d-flex align-items-center">
  <div class="status-msg">Click to select, TAB for alternates, CTRL adds, SHIFT unselects.</div>
  <span class="vsep"></span>
  <svg class="i16 ms-2 me-2" viewBox="0 0 16 16"><path d="M2 15v-5l2-2 2 2v5M6 15V7l2-2 2 2v8M10 15v-5l2-2 2 2v5" fill="#aaa" stroke="#888"/><circle cx="8" cy="3" r="2" fill="#999"/><circle cx="4" cy="6" r="1.500" fill="#999"/><circle cx="12" cy="6" r="1.500" fill="#999"/></svg>
  <div class="position-relative"><select class="stat-sel d-block" aria-label="Active workset"><option></option></select><svg class="chev"><use href="#thin"/></svg></div>
  <svg class="i16 ms-2 me-1" viewBox="0 0 16 16"><path d="M6 1h8v5H8l-2 4z" fill="#ddd" stroke="#888"/><path d="M1 15l2-6h4l2 6z" fill="#999"/></svg><span class="pe-4">:0</span>
  <svg class="i16 me-2" viewBox="0 0 16 16"><path d="M1 1h14v14H1z" fill="#fff" stroke="#222"/><path d="M1 2h14" stroke="#223" stroke-width="2"/><path d="M4 6h2M8 6h5M4 9h2M8 9h5M4 12h2M8 12h5" stroke="#333"/></svg>
  <svg class="i16 me-2" viewBox="0 0 16 16"><path d="M1 1h13v14H1z" fill="#999"/><path d="M3 13l5-7 5 8z" fill="#ccc"/></svg>
  <div class="position-relative"><select class="stat-sel d-block" aria-label="Design option"><option>Main Model</option></select><svg class="chev"><use href="#thin"/></svg></div>
  <div class="d-flex stat-tools ms-auto align-items-center">
    <svg class="i16" viewBox="0 0 16 16"><path d="M0 5q4-6 8 0 4-6 8 0-3 5-8 1-5 4-8-1z" fill="#f4c020" stroke="#a87c10"/><use href="#ptr" x="7" y="4" width="9" height="12"/></svg>
    <svg class="i16" viewBox="0 0 16 16"><path d="M1 14l5-8h6M3 11h8M1 14h9" fill="none" stroke="#1d6fb0" stroke-width="1.500"/><use href="#redx" x="8" y="0" width="7" height="7"/><use href="#ptr" x="7" y="5" width="8" height="11"/></svg>
    <svg class="i16" viewBox="0 0 16 16"><path d="M3 1h8v2l-1 3 2 3H2l2-3-1-3z" fill="#f08030" stroke="#a04010"/><path d="M7 9v5" stroke="#555"/><use href="#ptr" x="8" y="5" width="8" height="11"/></svg>
    <svg class="i16" viewBox="0 0 16 16"><path d="M2 4l6-2v10l-6 3z" fill="#9cd2f4" stroke="#1d6fb0"/><use href="#redx" x="8" y="0" width="7" height="7"/><use href="#ptr" x="7" y="5" width="8" height="11"/></svg>
    <svg class="i16" viewBox="0 0 16 16"><path d="M5 0v10M0 5h10M3 2l2-2 2 2M3 8l2 2 2-2M2 3 0 5l2 2M8 3l2 2-2 2" fill="none" stroke="#222"/><use href="#ptr" x="7" y="4" width="9" height="12"/></svg>
    <svg class="i16" viewBox="0 0 16 16"><circle cx="8" cy="8" r="5" fill="none" stroke="#999" stroke-width="3" stroke-dasharray="3 1"/></svg>
    <span class="d-flex align-items-center"><svg class="i16" viewBox="0 0 16 16"><path d="M1 1h14v2l-5 5v6l-4 2V8L1 3z" fill="url(#gs)" stroke="#444"/></svg>:0</span>
  </div>
</footer>
<script>
// Each mass: apex x, apex y, left corner x, right corner x. Extrusion height is shared.
const H = 24, K = 0.574;
const rows = [
 ['#ff0000','#000',[[527,450,469.5,584.5],[571.5,443.5,548.5,595],[595.5,431.5,575.5,616.5],[613.5,425.5,602.5,625.5]]],
 ['#80ff00','#000',[[623.5,471.5,507.5,738.5],[730,432,652.5,806.5],[799.5,408.5,751.5,847.5],[843.5,393.5,812.5,873.5],[875.5,376.5,847.5,903.5],[907.5,357.5,878.5,934.5],[938.5,339.5,910.5,966.5],[967.5,324.5,943.5,991.5],[994.5,309.5,970.5,1019.5],[1020.5,296.5,999.5,1040.5]]],
 ['#00ffff','#000',[[730,555.5,652.5,806.5],[791,544.5,757.5,824.5],[827,526.5,796.5,857.5],[857,513.5,833.5,879.5],[881.5,499.5,859.5,903.5],[907,484.5,883.5,928.5],[931,470.5,908.5,953.5]]],
 ['#8080ff','#000',[[794,614.5,755.5,831.5],[835,591.5,798.5,871.5],[872.5,572.5,841.5,904.5],[902.5,560,880.5,925.5]]],
 ['#800040','#000',[[858,629,780.5,935.5],[920,617.5,885.5,954.5],[956.5,598,924.5,989.5],[989.5,583,963.5,1014.5]]],
 ['#ff00ff','#000',[[950.5,675,861.5,1039.5],[1038.5,635.5,968.5,1108.5],[1107.5,604.5,1052.5,1162.5],[1152.5,595.5,1126.5,1177.5]]],
 ['#ff8000','#000',[[1042.5,736,965.5,1119.5],[1105.5,722.5,1069.5,1143],[1144,703,1111.5,1176.5]]],
 ['#dddd00','#dbd200',[[1088.5,794.5,1067.5,1139.5],[1125,774,1104,1175],[1161.5,752.5,1139.5,1211],[1196.5,731.5,1176.5,1248.5],[1232,711,1212.5,1284.5]]],
 ['#000080','#000',[[1158.5,808,1091.5,1226.5],[1233.5,765.5,1166.5,1301.5],[1295.5,743.5,1252.5,1338.5],[1337.5,725.5,1304.5,1369.5]]],
 ['#800080','#000',[[1239.5,849,1162.5,1316.5],[1317.5,811.5,1253.5,1382.5],[1378.5,787.5,1334.5,1423.5],[1417.5,776,1392.5,1443.5]]]
];
const masses = rows.flatMap(([fill, line, list]) => list.map(b => {
  const [tx, ty, lx, rx] = b;
  const ly = ty + (tx - lx) * K, ry = ty + (rx - tx) * K, bx = lx + rx - tx, by = ly + ry - ty;
  const p = (x, y) => x.toFixed(1) + ' ' + y.toFixed(1);
  const hidden = `M${p(tx,ty)}V${ty+H}L${p(lx,ly+H)}M${p(tx,ty+H)}L${p(rx,ry+H)}`;
  const hull = `M${p(tx,ty)}L${p(rx,ry)}L${p(rx,ry+H)}L${p(bx,by+H)}L${p(lx,ly+H)}L${p(lx,ly)}Z`;
  const front = `${hull}M${p(lx,ly)}L${p(bx,by)}L${p(rx,ry)}M${p(bx,by)}L${p(bx,by+H)}`;
  return `<path d="${hidden}" fill="none" stroke="${line}"/><path d="${hull}" fill="${fill}" fill-opacity=".6"/><path d="${front}" fill="none" stroke="${line}"/>`;
}));
// Averaging both paint orders makes the transparency independent of depth.
document.getElementById('model').innerHTML =
  `<g shape-rendering="crispEdges">${masses.join('')}</g><g opacity=".5" shape-rendering="crispEdges"><rect x="221" y="191" width="1684" height="820" fill="#fff"/>${masses.slice().reverse().join('')}</g>`;
</script>
</body>
</html>
